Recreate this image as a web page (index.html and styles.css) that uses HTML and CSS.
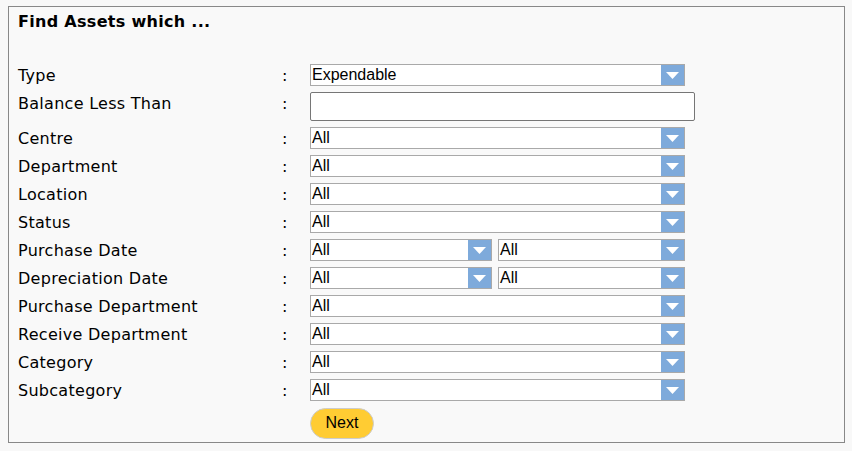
FILE: index.html
```html
<!DOCTYPE html>
<html>
<head>
<meta charset="utf-8">
<link rel="stylesheet" href="styles.css">
</head>
<body>
<div class="panel">
  <div class="title">Find Assets which ...</div>
  <div class="form">
    <div class="label">Type</div><div class="colon">:</div>
    <div class="select"><span class="value">Expendable</span><span class="arrow"><svg width="13" height="7" viewBox="0 0 13 7"><path d="M0 0H13L6.5 7Z" fill="#fff"/></svg></span></div>

    <div class="label">Balance Less Than</div><div class="colon">:</div>
    <div class="input"></div>

    <div class="label">Centre</div><div class="colon">:</div>
    <div class="select"><span class="value">All</span><span class="arrow"><svg width="13" height="7" viewBox="0 0 13 7"><path d="M0 0H13L6.5 7Z" fill="#fff"/></svg></span></div>

    <div class="label">Department</div><div class="colon">:</div>
    <div class="select"><span class="value">All</span><span class="arrow"><svg width="13" height="7" viewBox="0 0 13 7"><path d="M0 0H13L6.5 7Z" fill="#fff"/></svg></span></div>

    <div class="label">Location</div><div class="colon">:</div>
    <div class="select"><span class="value">All</span><span class="arrow"><svg width="13" height="7" viewBox="0 0 13 7"><path d="M0 0H13L6.5 7Z" fill="#fff"/></svg></span></div>

    <div class="label">Status</div><div class="colon">:</div>
    <div class="select"><span class="value">All</span><span class="arrow"><svg width="13" height="7" viewBox="0 0 13 7"><path d="M0 0H13L6.5 7Z" fill="#fff"/></svg></span></div>

    <div class="label">Purchase Date</div><div class="colon">:</div>
    <div class="pair">
      <div class="select half-a"><span class="value">All</span><span class="arrow"><svg width="13" height="7" viewBox="0 0 13 7"><path d="M0 0H13L6.5 7Z" fill="#fff"/></svg></span></div>
      <div class="select half-b"><span class="value">All</span><span class="arrow"><svg width="13" height="7" viewBox="0 0 13 7"><path d="M0 0H13L6.5 7Z" fill="#fff"/></svg></span></div>
    </div>

    <div class="label">Depreciation Date</div><div class="colon">:</div>
    <div class="pair">
      <div class="select half-a"><span class="value">All</span><span class="arrow"><svg width="13" height="7" viewBox="0 0 13 7"><path d="M0 0H13L6.5 7Z" fill="#fff"/></svg></span></div>
      <div class="select half-b"><span class="value">All</span><span class="arrow"><svg width="13" height="7" viewBox="0 0 13 7"><path d="M0 0H13L6.5 7Z" fill="#fff"/></svg></span></div>
    </div>

    <div class="label">Purchase Department</div><div class="colon">:</div>
    <div class="select"><span class="value">All</span><span class="arrow"><svg width="13" height="7" viewBox="0 0 13 7"><path d="M0 0H13L6.5 7Z" fill="#fff"/></svg></span></div>

    <div class="label">Receive Department</div><div class="colon">:</div>
    <div class="select"><span class="value">All</span><span class="arrow"><svg width="13" height="7" viewBox="0 0 13 7"><path d="M0 0H13L6.5 7Z" fill="#fff"/></svg></span></div>

    <div class="label">Category</div><div class="colon">:</div>
    <div class="select"><span class="value">All</span><span class="arrow"><svg width="13" height="7" viewBox="0 0 13 7"><path d="M0 0H13L6.5 7Z" fill="#fff"/></svg></span></div>

    <div class="label">Subcategory</div><div class="colon">:</div>
    <div class="select"><span class="value">All</span><span class="arrow"><svg width="13" height="7" viewBox="0 0 13 7"><path d="M0 0H13L6.5 7Z" fill="#fff"/></svg></span></div>

    <div class="spacer"></div><div class="spacer"></div>
    <div class="actions"><button class="next">Next</button></div>
  </div>
</div>
</body>
</html>
```

FILE: styles.css
```css
html, body {
  margin: 0;
  padding: 0;
  background: #f8f8f8;
}
body {
  padding: 6px 8px;
}
.panel {
  box-sizing: border-box;
  width: 837px;
  height: 437px;
  border: 1px solid #888;
  background: #f9f9f9;
  padding: 6px 9px 4px;
  font-family: "DejaVu Sans", Verdana, sans-serif;
  color: #000;
}
.title {
  font-weight: bold;
  font-size: 16px;
  line-height: 18px;
  letter-spacing: 0.3px;
  margin-bottom: 33px;
}
.form {
  display: grid;
  grid-template-columns: 264px 28px 1fr;
  row-gap: 6px;
  align-items: start;
}
.label, .colon {
  font-size: 16px;
  line-height: 20px;
  padding-top: 2px;
}
.label {
  letter-spacing: 0.28px;
}
.select {
  box-sizing: border-box;
  display: flex;
  width: 375px;
  height: 22px;
  border: 1px solid #a9a9a9;
  background: #fff;
}
.value {
  flex: 1;
  padding-left: 1px;
  font-family: "Liberation Sans", Arial, sans-serif;
  font-size: 16px;
  line-height: 20px;
}
.arrow {
  width: 23px;
  height: 20px;
  background: #7eaadb;
  display: flex;
  align-items: center;
  justify-content: center;
}
.input {
  box-sizing: border-box;
  width: 385px;
  height: 29px;
  border: 1px solid #767676;
  border-radius: 2px;
  background: #fff;
}
.pair {
  display: flex;
  gap: 6px;
}
.select.half-a {
  width: 182px;
}
.select.half-b {
  width: 187px;
}
.actions {
  padding-top: 1px;
}
.next {
  box-sizing: border-box;
  width: 64px;
  height: 31px;
  border: 1px solid #cccccc;
  border-radius: 16px;
  background: #ffcc33;
  font-family: "Liberation Sans", Arial, sans-serif;
  font-size: 16px;
  line-height: 26px;
  padding: 0 0 2px;
  color: #000;
}
```
